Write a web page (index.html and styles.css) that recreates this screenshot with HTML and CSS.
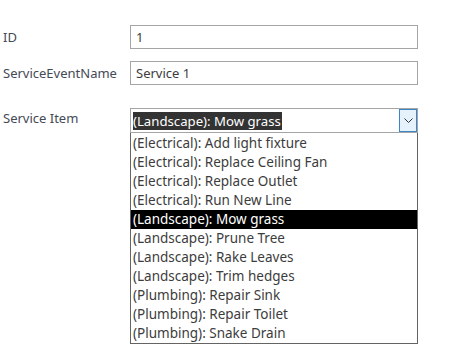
FILE: index.html
```html
<!DOCTYPE html>
<html lang="en">
<head>
  <meta charset="UTF-8" />
  <title>Service Event</title>
  <link rel="stylesheet" href="styles.css">
</head>
<body>
  <div class="form">
    <div class="row">
      <label class="label">ID</label>
      <div class="field">1</div>
    </div>

    <div class="row">
      <label class="label">ServiceEventName</label>
      <div class="field">Service 1</div>
    </div>

    <div class="row row-select">
      <label class="label">Service Item</label>
      <div class="combo">
        <div class="combo-box">
          <span class="combo-value">(Landscape): Mow grass</span>
          <span class="combo-btn">
            <svg width="9" height="5" viewBox="0 0 9 5"><path d="M0.5 0.5 L4.5 4.5 L8.5 0.5" fill="none" stroke="#333" stroke-width="1"/></svg>
          </span>
        </div>
        <div class="combo-list">
          <div class="item">(Electrical): Add light fixture</div>
          <div class="item">(Electrical): Replace Ceiling Fan</div>
          <div class="item">(Electrical): Replace Outlet</div>
          <div class="item">(Electrical): Run New Line</div>
          <div class="item selected">(Landscape): Mow grass</div>
          <div class="item">(Landscape): Prune Tree</div>
          <div class="item">(Landscape): Rake Leaves</div>
          <div class="item">(Landscape): Trim hedges</div>
          <div class="item">(Plumbing): Repair Sink</div>
          <div class="item">(Plumbing): Repair Toilet</div>
          <div class="item">(Plumbing): Snake Drain</div>
        </div>
      </div>
    </div>
  </div>
</body>
</html>
```

FILE: styles.css
```css
* {
  margin: 0;
  padding: 0;
  box-sizing: border-box;
  font-family: 'Noto Sans', sans-serif;
}

body {
  background: #fff;
  color: #3c3c3c;
  font-size: 13px;
}

.form {
  padding-top: 25px;
  display: flex;
  flex-direction: column;
  gap: 12px;
}

.row {
  display: grid;
  grid-template-columns: 130px 288px;
  align-items: center;
}

.row-select {
  margin-top: 11px;
  align-items: start;
}

.label {
  padding-left: 3px;
  color: #444a55;
}

.row-select .label {
  padding-top: 1px;
}

.field {
  height: 24px;
  border: 1px solid #a5a5a5;
  padding-left: 5px;
  line-height: 22px;
}

.combo {
  display: flex;
  flex-direction: column;
}

.combo-box {
  height: 25px;
  border: 1px solid #a5a5a5;
  display: flex;
  align-items: center;
  justify-content: space-between;
  padding-left: 2px;
}

.combo-value {
  background: #333;
  color: #fff;
  font-size: 13.2px;
  line-height: 18px;
  padding-right: 1px;
}

.combo-btn {
  width: 18px;
  height: 23px;
  border: 1px solid #3d86c6;
  background: #e5f1fb;
  display: flex;
  align-items: center;
  justify-content: center;
}

.combo-list {
  border: 1px solid #646464;
  border-top: none;
  background: #fff;
  padding-top: 1px;
}

.item {
  height: 19px;
  line-height: 19px;
  padding-left: 2px;
  font-size: 13.5px;
}

.item.selected {
  background: #000;
  color: #fff;
}
```
